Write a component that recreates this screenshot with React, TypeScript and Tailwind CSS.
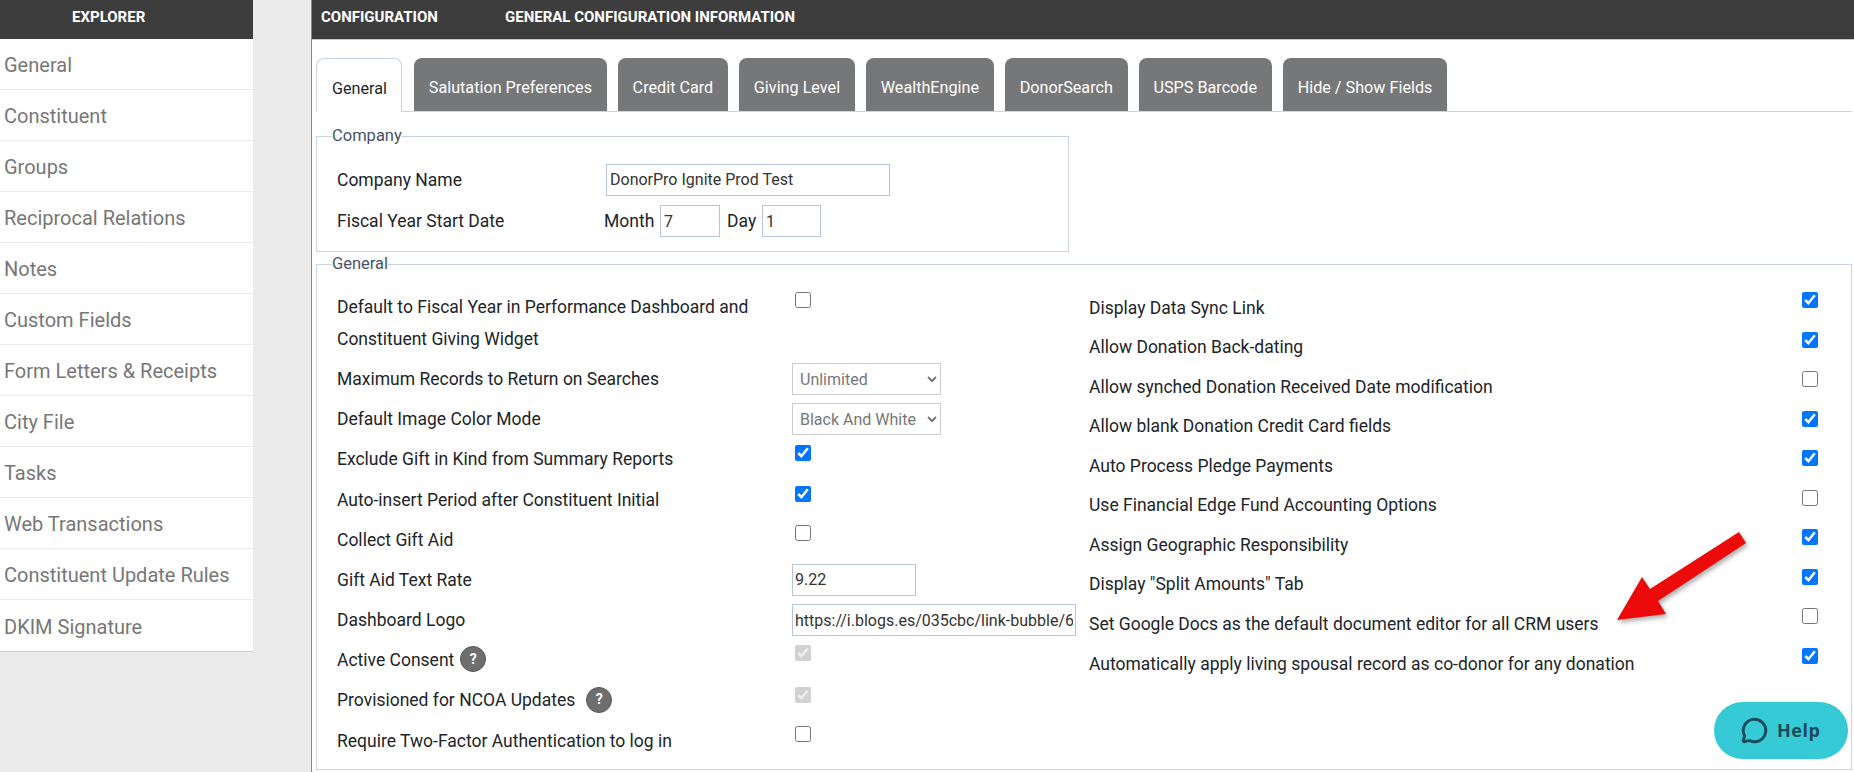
import { MessageCircle } from 'lucide-react';

const sideItems = [
  'General',
  'Constituent',
  'Groups',
  'Reciprocal Relations',
  'Notes',
  'Custom Fields',
  'Form Letters & Receipts',
  'City File',
  'Tasks',
  'Web Transactions',
  'Constituent Update Rules',
  'DKIM Signature',
];

const tabs = [
  'Salutation Preferences',
  'Credit Card',
  'Giving Level',
  'WealthEngine',
  'DonorSearch',
  'USPS Barcode',
  'Hide / Show Fields',
];

const rightRows = [
  { label: 'Display Data Sync Link', checked: true },
  { label: 'Allow Donation Back-dating', checked: true },
  { label: 'Allow synched Donation Received Date modification', checked: false },
  { label: 'Allow blank Donation Credit Card fields', checked: true },
  { label: 'Auto Process Pledge Payments', checked: true },
  { label: 'Use Financial Edge Fund Accounting Options', checked: false },
  { label: 'Assign Geographic Responsibility', checked: true },
  { label: 'Display "Split Amounts" Tab', checked: true },
  { label: 'Set Google Docs as the default document editor for all CRM users', checked: false },
  { label: 'Automatically apply living spousal record as co-donor for any donation', checked: true },
];

function Check({
  checked = false,
  disabled = false,
  className = 'mt-[5px]',
}: {
  checked?: boolean;
  disabled?: boolean;
  className?: string;
}) {
  return (
    <input
      type="checkbox"
      defaultChecked={checked}
      disabled={disabled}
      className={`block h-[16px] w-[16px] ${className}`}
    />
  );
}

function HelpDot({ className }: { className: string }) {
  return (
    <span
      className={`flex h-[26px] w-[26px] items-center justify-center rounded-full border border-[#555] bg-[#6e6e6e] text-[14px] font-bold text-white ${className}`}
    >
      ?
    </span>
  );
}

function LeftRow({ label, children }: { label: React.ReactNode; children?: React.ReactNode }) {
  return (
    <div className="grid h-[40.2px] grid-cols-[455px_1fr]">
      <div className="flex items-center pt-[2px]">{label}</div>
      <div>{children}</div>
    </div>
  );
}

function CheckCell({ children }: { children: React.ReactNode }) {
  return <div className="ml-[3px]">{children}</div>;
}

const inputCls =
  'block h-[32px] border border-[#b5c6de] bg-white px-[2px] text-[16px] text-[#333] outline-none';
const selectCls =
  'mt-[5px] block h-[32px] w-[149px] border border-[#ccc] bg-white pl-[3px] text-[16px] text-[#777]';

export default function App() {
  return (
    <div className="relative flex h-[772px] w-[1854px] overflow-hidden bg-[#ebebeb] font-['Roboto',sans-serif] text-[17.5px] text-[#212529]">
      {/* Explorer */}
      <aside className="w-[253px] shrink-0">
        <div className="h-[39px] bg-[#3d3d3d] pl-[72px] pt-[8px] text-[15px] leading-[18px] font-bold text-white">
          EXPLORER
        </div>
        <ul className="border-b border-[#c8d0da] bg-white">
          {sideItems.map((item, i) => (
            <li
              key={item}
              className={`flex h-[51px] items-center pl-[4px] pt-[2px] text-[20px] text-[#777] ${
                i < sideItems.length - 1 ? 'border-b border-[#ebebeb]' : ''
              }`}
            >
              {item}
            </li>
          ))}
        </ul>
      </aside>

      {/* Configuration */}
      <main className="ml-[58px] flex-1 border-l border-[#8a8a8a] bg-white">
        <div className="flex h-[40px] border-b border-[#c9c9c9] bg-[#3d3d3d] pt-[8px] text-[15px] leading-[18px] font-bold text-white">
          <span className="ml-[9px] w-[184px]">CONFIGURATION</span>
          <span>GENERAL CONFIGURATION INFORMATION</span>
        </div>

        <div className="pl-[4px] pr-[2px]">
          <div className="mt-[18px] flex h-[54px] gap-[11px] border-b border-[#c5d3e3] text-[16.2px]">
            <div className="mr-[1px] flex h-[54px] w-[86px] items-center justify-center rounded-t-[8px] border border-b-0 border-[#c5d3e3] bg-white pl-[1px] pt-[7px]">
              General
            </div>
            {tabs.map((tab) => (
              <div
                key={tab}
                className="flex h-[53px] items-center rounded-t-[8px] bg-[#767778] px-[14.8px] pt-[7px] text-white"
              >
                {tab}
              </div>
            ))}
          </div>

          <fieldset className="mt-[14px] w-[753px] border border-[#c5d3e3] pb-[14px] pl-[20px]">
            <legend className="-ml-[5px] text-[16.5px] leading-[20px] text-[#44546a]">Company</legend>
            <div className="mt-[18px] flex h-[31px] items-center">
              <span className="w-[269px] pt-[2px]">Company Name</span>
              <input defaultValue="DonorPro Ignite Prod Test" className={`${inputCls} w-[284px] !px-[3px]`} />
            </div>
            <div className="mt-[10px] flex h-[32px] items-center">
              <span className="w-[267px] pt-[1px]">Fiscal Year Start Date</span>
              <span className="w-[56px] pt-[1px]">Month</span>
              <input defaultValue="7" className={`${inputCls} w-[60px] !px-[3px]`} />
              <span className="ml-[7px] w-[35px] pt-[1px]">Day</span>
              <input defaultValue="1" className={`${inputCls} w-[59px] !px-[3px]`} />
            </div>
          </fieldset>

          <fieldset className="mt-[2px] border border-[#c5d3e3] pb-[9px] pl-[20px]">
            <legend className="-ml-[5px] text-[16.5px] leading-[20px] text-[#44546a]">General</legend>
            <div className="mt-[13px] grid grid-cols-[752px_1fr]">
              <div>
                <div className="grid h-[71px] grid-cols-[455px_1fr]">
                  <div className="w-[430px] pt-[4px] leading-[32px]">
                    Default to Fiscal Year in Performance Dashboard and Constituent Giving Widget
                  </div>
                  <CheckCell>
                    <Check />
                  </CheckCell>
                </div>
                <LeftRow label="Maximum Records to Return on Searches">
                  <select className={selectCls} defaultValue="Unlimited">
                    <option>Unlimited</option>
                  </select>
                </LeftRow>
                <LeftRow label="Default Image Color Mode">
                  <select className={selectCls} defaultValue="Black And White">
                    <option>Black And White</option>
                  </select>
                </LeftRow>
                <LeftRow label="Exclude Gift in Kind from Summary Reports">
                  <CheckCell>
                    <Check checked className="mt-[7px]" />
                  </CheckCell>
                </LeftRow>
                <LeftRow label="Auto-insert Period after Constituent Initial">
                  <CheckCell>
                    <Check checked className="mt-[7px]" />
                  </CheckCell>
                </LeftRow>
                <LeftRow label="Collect Gift Aid">
                  <CheckCell>
                    <Check className="mt-[6px]" />
                  </CheckCell>
                </LeftRow>
                <LeftRow label="Gift Aid Text Rate">
                  <input defaultValue="9.22" className={`${inputCls} mt-[5px] w-[124px]`} />
                </LeftRow>
                <LeftRow label="Dashboard Logo">
                  <input
                    defaultValue="https://i.blogs.es/035cbc/link-bubble/6"
                    className={`${inputCls} mt-[5px] w-[284px]`}
                  />
                </LeftRow>
                <LeftRow
                  label={
                    <>
                      Active Consent
                      <HelpDot className="ml-[6px] -mt-[2px]" />
                    </>
                  }
                >
                  <CheckCell>
                    <Check checked disabled className="mt-[6px]" />
                  </CheckCell>
                </LeftRow>
                <LeftRow
                  label={
                    <>
                      Provisioned for NCOA Updates
                      <HelpDot className="ml-[11px] -mt-[2px]" />
                    </>
                  }
                >
                  <CheckCell>
                    <Check checked disabled className="mt-[7px]" />
                  </CheckCell>
                </LeftRow>
                <LeftRow label="Require Two-Factor Authentication to log in">
                  <CheckCell>
                    <Check className="mt-[6px]" />
                  </CheckCell>
                </LeftRow>
              </div>

              <div>
                {rightRows.map((row) => (
                  <div key={row.label} className="grid h-[39.55px] grid-cols-[713px_1fr]">
                    <div className="flex items-center pt-[2px]">{row.label}</div>
                    <div>
                      <Check checked={row.checked} />
                    </div>
                  </div>
                ))}
              </div>
            </div>
          </fieldset>
        </div>
      </main>

      {/* Annotation arrow */}
      <svg
        className="absolute left-[1600px] top-[520px] h-[120px] w-[160px] drop-shadow-[2px_3px_2px_rgba(0,0,0,0.3)]"
        viewBox="1600 520 160 120"
      >
        <polygon
          points="1617,620 1642,577 1650,589 1739,532 1746,543 1658,601 1666,614"
          fill="#eb0909"
        />
      </svg>

      {/* Help button */}
      <button className="absolute left-[1714px] top-[702px] flex h-[57px] w-[134px] items-center rounded-full bg-[#36c9d6] pl-[27px] font-['Open_Sans',sans-serif] text-[18px] font-bold tracking-[0.5px] text-[#1b4a5a]">
        <MessageCircle size={27} strokeWidth={2.6} className="mr-[9px]" />
        Help
      </button>
    </div>
  );
}
